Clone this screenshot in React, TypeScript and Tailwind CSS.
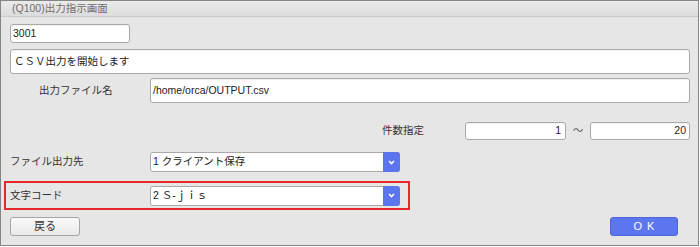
import React from "react";

const font = "font-['Liberation_Sans','Noto_Sans_CJK_JP',sans-serif]";

function TextBox({ value, className, align = "left" }: { value: string; className: string; align?: "left" | "right" }) {
  return (
    <div
      className={`bg-white border border-[#a9a9a9] rounded-[3px] shadow-[inset_0_1px_1px_rgba(0,0,0,0.06)] flex items-center px-[2px] text-[10.5px] text-[#222] ${
        align === "right" ? "justify-end" : ""
      } ${className}`}
    >
      {value}
    </div>
  );
}

function Select({ value }: { value: string }) {
  return (
    <div className="w-[250px] h-[20px] flex bg-white border border-[#a9a9a9] rounded-[3px]">
      <div className="flex-1 flex items-center pl-[2px] text-[10.5px] text-[#222] whitespace-pre">{value}</div>
      <div className="w-[17px] -my-px -mr-px bg-[#5c74ee] rounded-r-[3px] flex items-center justify-center">
        <svg width="7" height="5" viewBox="0 0 7 5">
          <path d="M1 1l2.5 2.5L6 1" stroke="#fff" strokeWidth="1.6" fill="none" />
        </svg>
      </div>
    </div>
  );
}

export default function App() {
  return (
    <div className={`w-[700px] h-[247px] bg-white ${font}`}>
      <div className="w-[699px] h-[246px] border border-[#858585] bg-[#e6e6e6] flex flex-col">
        {/* title bar */}
        <div className="h-[16px] shrink-0 bg-gradient-to-b from-[#ebebeb] to-[#dcdcdc] border-b border-[#c9c9c9] pl-[11px] text-[10.5px] leading-[15px] text-[#6e6e6e]">
          (Q100)出力指示画面
        </div>

        <div className="flex flex-col pl-[9px] pr-[8px] text-[10.5px] text-[#333]">
          <TextBox value="3001" className="mt-[7px] w-[120px] h-[19px]" />
          <TextBox value="ＣＳＶ出力を開始します" className="mt-[6px] h-[25px] !pl-[3px]" />

          <div className="mt-[4px] flex items-center">
            <div className="w-[140px] pl-[29px]">出力ファイル名</div>
            <TextBox value="/home/orca/OUTPUT.csv" className="flex-1 h-[25px]" />
          </div>

          <div className="mt-[19px] flex items-center">
            <div className="ml-[372px] w-[83px]">件数指定</div>
            <TextBox value="1" align="right" className="w-[101px] h-[18px] !pr-[4px]" />
            <div className="w-[24px] text-center text-[#555]">～</div>
            <TextBox value="20" align="right" className="w-[100px] h-[18px] !pr-[3px]" />
          </div>

          <div className="mt-[12px] flex items-center">
            <div className="w-[140px]">ファイル出力先</div>
            <Select value="1 クライアント保存" />
          </div>

          <div className="mt-[9px] -ml-[6px] w-[406px] h-[29px] border-2 border-[#e5262b] flex items-center pl-[4px]">
            <div className="w-[140px]">文字コード</div>
            <Select value="2 Ｓ-ｊｉｓ" />
          </div>

          <div className="mt-[7px] flex items-center justify-between">
            <button className="w-[70px] h-[19px] bg-gradient-to-b from-[#fafafa] to-[#e9e9e9] border border-[#a5a5a5] rounded-[3px] text-[11px] text-[#333] leading-none">
              戻る
            </button>
            <button className="mr-[12px] w-[68px] h-[19px] bg-[#5c76f0] border border-[#4e66d8] rounded-[3px] text-[11px] text-white leading-none tracking-[5px] pl-[5px]">
              OK
            </button>
          </div>
        </div>
      </div>
    </div>
  );
}
